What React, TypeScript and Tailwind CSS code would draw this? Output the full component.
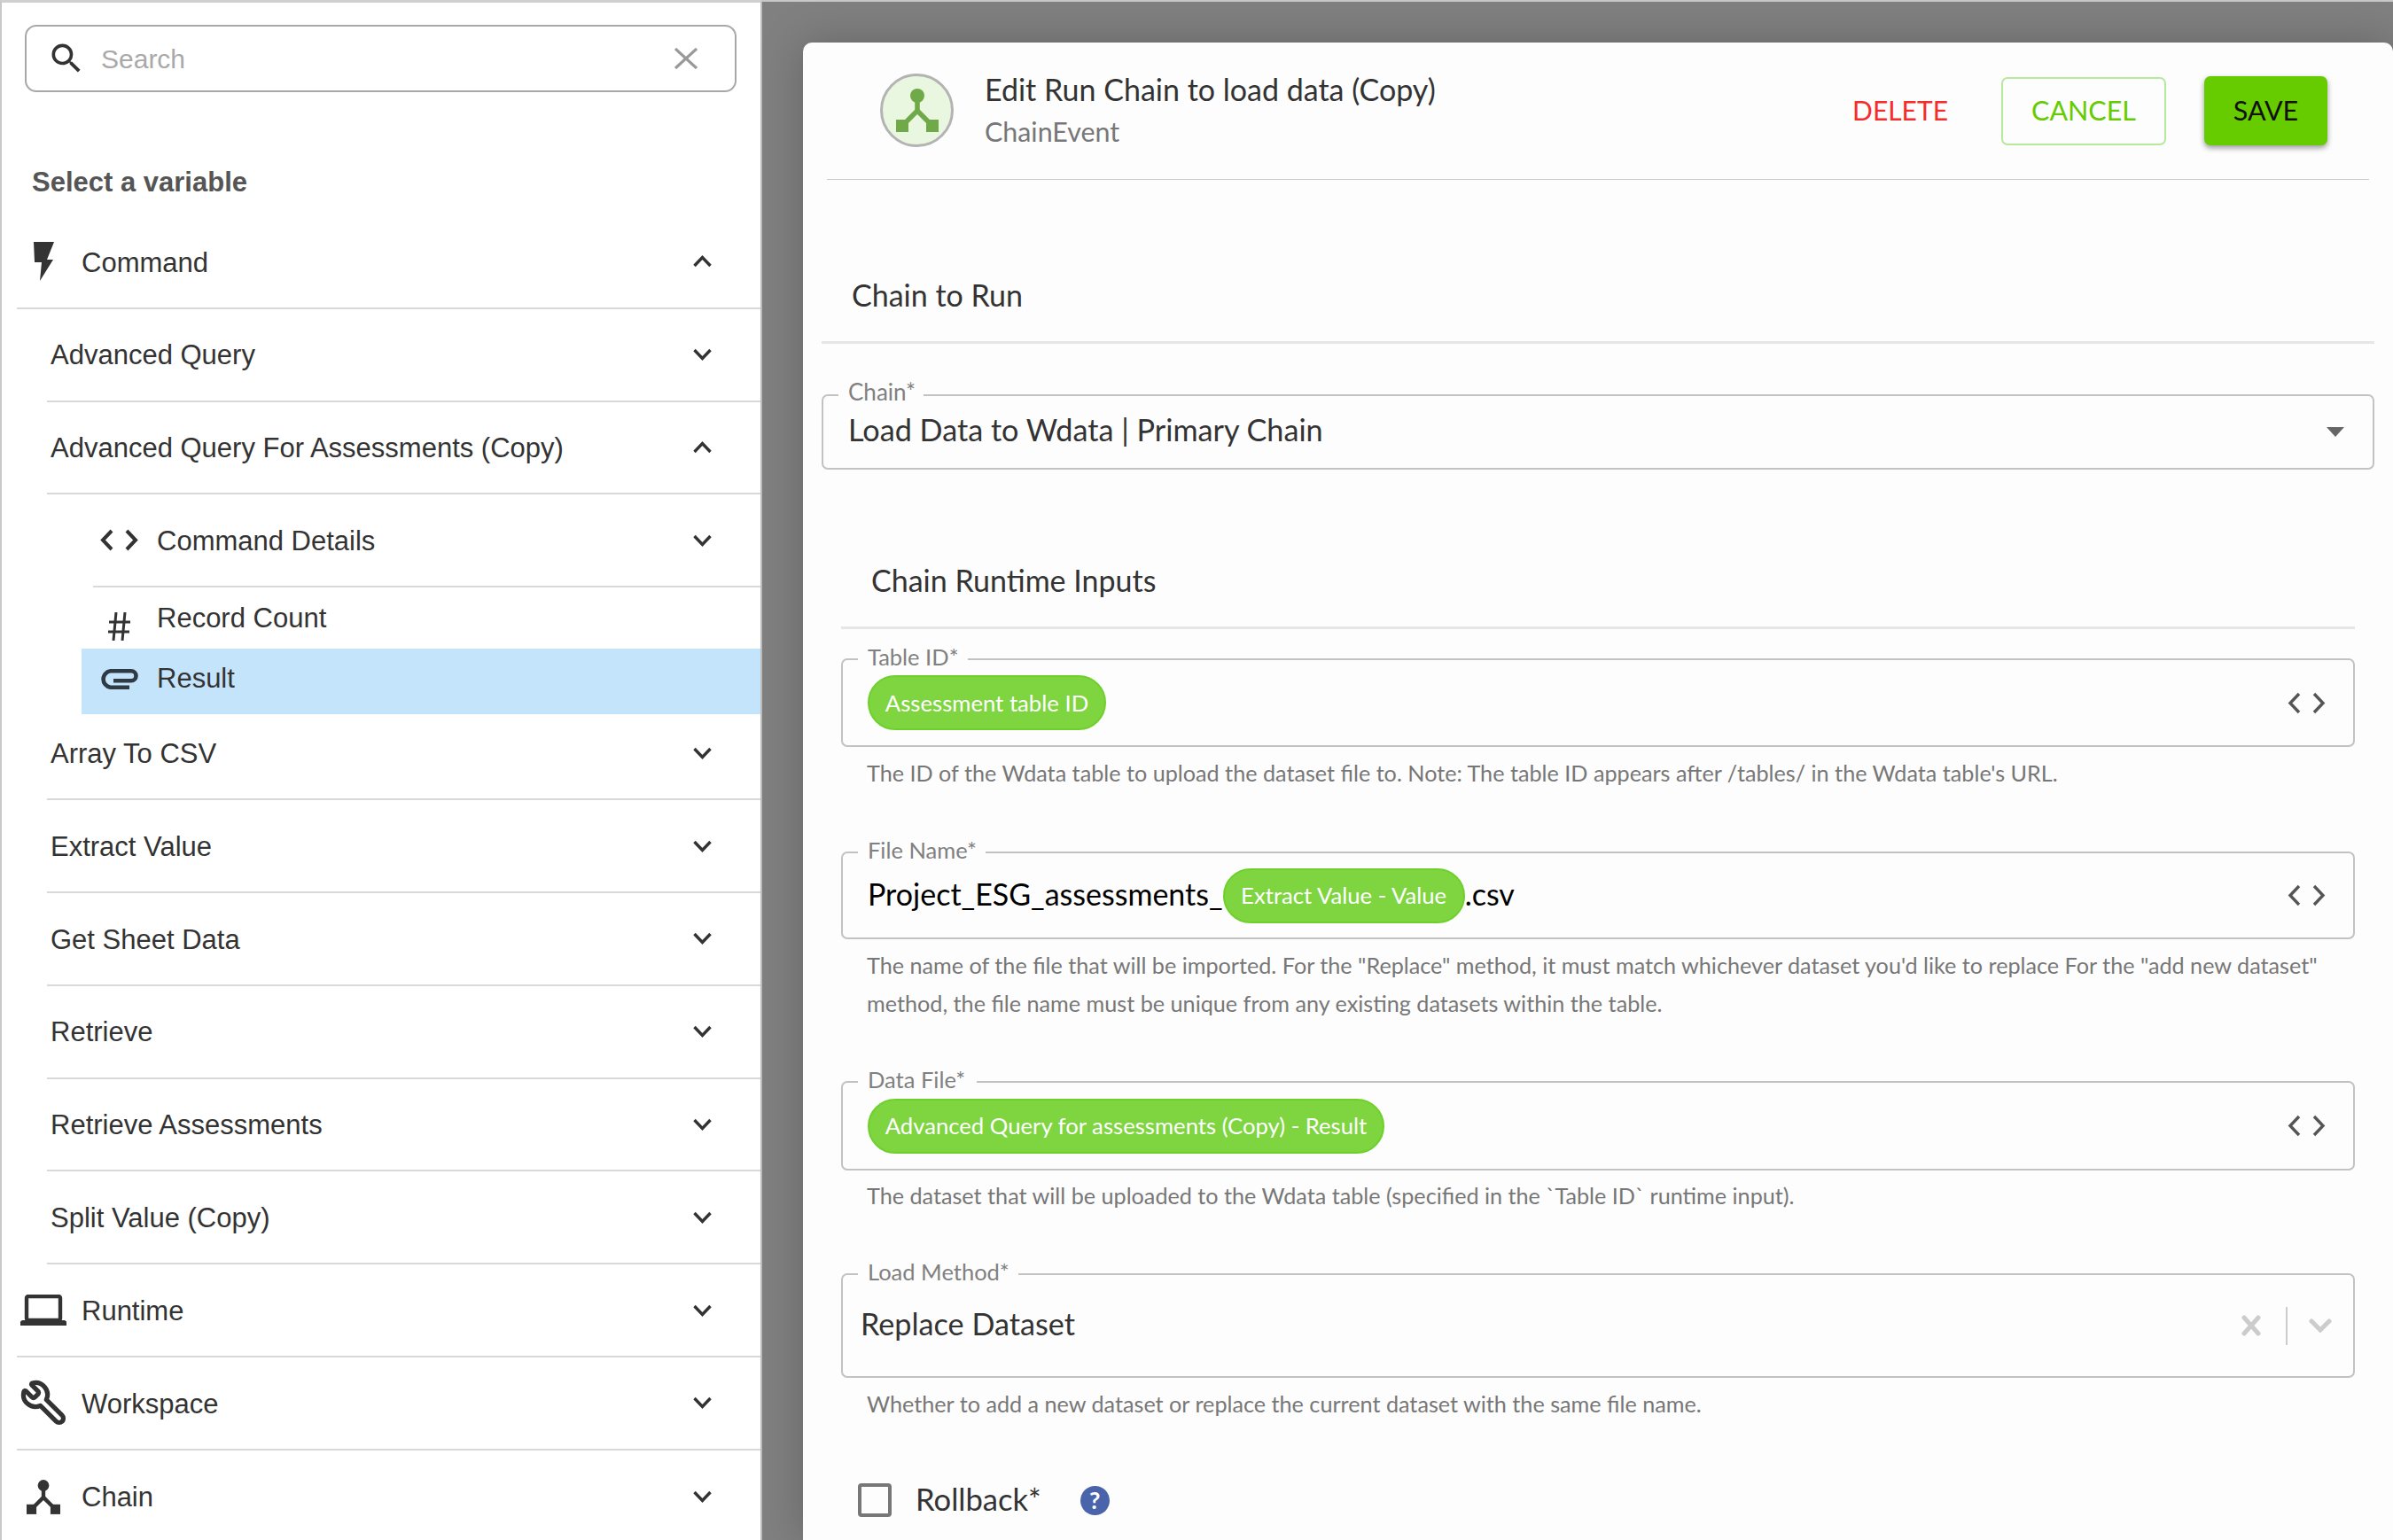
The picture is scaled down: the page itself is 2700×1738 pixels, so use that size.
import { MdSearch } from "react-icons/md";
import { Wrench } from "lucide-react";
import type { ReactNode } from "react";

function Chevron({ up }: { up?: boolean }) {
	return (
		<svg width="21" height="14" viewBox="0 0 21 14" fill="none" stroke="#333" strokeWidth="3.4" className={up ? "rotate-180" : ""}>
			<polyline points="1.5,2 10.5,11.5 19.5,2" />
		</svg>
	);
}

function Bolt() {
	return (
		<svg width="23" height="44" viewBox="0 0 23 44" fill="#333">
			<polygon points="0,0 23,0 15,20 22,20 7,44 9,23 1,23" />
		</svg>
	);
}

function Code({ w = 43, h = 25, color = "#333", sw = 4 }: { w?: number; h?: number; color?: string; sw?: number }) {
	return (
		<svg width={w} height={h} viewBox="0 0 43 25" fill="none" stroke={color} strokeWidth={sw}>
			<polyline points="13,2 3,12.5 13,23" />
			<polyline points="30,2 40,12.5 30,23" />
		</svg>
	);
}

function Hash() {
	return (
		<svg width="25" height="32" viewBox="0 0 25 32" fill="none" stroke="#333" strokeWidth="3">
			<line x1="9" y1="0" x2="6" y2="32" />
			<line x1="19" y1="0" x2="16" y2="32" />
			<line x1="1" y1="11" x2="25" y2="11" />
			<line x1="0" y1="22" x2="24" y2="22" />
		</svg>
	);
}

function Clip() {
	return (
		<svg width="43" height="23" viewBox="0 0 43 23" fill="none" stroke="#2f3b44" strokeWidth="4.6">
			<path d="M33 20.7 H11.5 A9.3 9.3 0 0 1 11.5 2.3 H35 A5.5 5.5 0 0 1 35 13.3 H15" />
		</svg>
	);
}

function Laptop() {
	return (
		<svg width="52" height="35" viewBox="0 0 52 35" fill="none" stroke="#333">
			<rect x="7" y="2" width="38" height="27" rx="2" strokeWidth="4.4" />
			<path d="M2 29 H50 L52 30.5 V35 H0 V30.5 Z" fill="#333" stroke="none" />
		</svg>
	);
}

function ChainIcon({ color = "#333", w = 38, h = 39 }: { color?: string; w?: number; h?: number }) {
	return (
		<svg width={w} height={h} viewBox="0 0 48 49" fill="none" stroke={color}>
			<circle cx="24" cy="8" r="8" fill={color} stroke="none" />
			<line x1="24" y1="12" x2="24" y2="27" strokeWidth="5.5" />
			<polyline points="9,40 24,25 39,40" strokeWidth="5.5" />
			<rect x="0" y="35" width="14" height="14" fill={color} stroke="none" />
			<rect x="34" y="35" width="14" height="14" fill={color} stroke="none" />
		</svg>
	);
}

function Row({ label, icon, level, up, h = "h-[104.8px]" }: { label: string; icon?: ReactNode; level: 0 | 1 | 2; up?: boolean; h?: string }) {
	const ml = level === 0 ? "ml-[19px]" : level === 1 ? "ml-[53px]" : "ml-[105px]";
	return (
		<div className={`${ml} ${h} flex items-center border-b-[2px] border-[#d9d9d9] pr-[55px]`}>
			{level === 0 && <div className="w-[60px] mr-[13px] flex justify-center shrink-0">{icon}</div>}
			{level === 1 && <div className="w-[4px] shrink-0" />}
			{level === 2 && <div className="w-[59px] mr-[13px] flex justify-center shrink-0">{icon}</div>}
			<span className="flex-1 pt-[3px] text-[31px] text-[#333]">{label}</span>
			<Chevron up={up} />
		</div>
	);
}

function Sidebar() {
	const rest = ["Extract Value", "Get Sheet Data", "Retrieve", "Retrieve Assessments", "Split Value (Copy)"];
	return (
		<aside className="w-[860px] shrink-0 h-full bg-white border-l-[2px] border-r-[2px] border-t-[3px] border-l-[#c8c8c8] border-r-[#bcbcbc] border-t-[#cfcfcf] font-['Liberation_Sans',sans-serif] overflow-hidden">
			<div className="ml-[26px] mr-[27px] mt-[25px] h-[76px] border-[2px] border-[#a8a8a8] rounded-[13px] flex items-center pl-[23px] pr-[42px]">
				<MdSearch size={44} color="#333" className="shrink-0" />
				<span className="ml-[17px] flex-1 text-[30px] text-[#a9a9a9]">Search</span>
				<svg width="26" height="24" viewBox="0 0 26 24" stroke="#999" strokeWidth="3.2">
					<line x1="1" y1="1" x2="25" y2="23" />
					<line x1="25" y1="1" x2="1" y2="23" />
				</svg>
			</div>
			<h2 className="ml-[34px] mt-[84px] h-[36px] leading-[36px] text-[31px] font-bold text-[#555]">Select a variable</h2>
			<div className="mt-[20px] -ml-[2px]">
				<Row label="Command" level={0} up icon={<Bolt />} />
				<Row label="Advanced Query" level={1} />
				<Row label="Advanced Query For Assessments (Copy)" level={1} up />
				<Row label="Command Details" level={2} icon={<Code />} />
				<div className="ml-[105px] h-[69px] flex items-center">
					<div className="w-[59px] mr-[13px] flex justify-center mt-[18px]"><Hash /></div>
					<span className="pt-[1px] text-[31px] text-[#333]">Record Count</span>
				</div>
				<div className="ml-[92px] h-[74px] bg-[#c3e4fb] flex items-center pl-[13px] pb-[6px]">
					<div className="w-[59px] mr-[13px] flex justify-center"><Clip /></div>
					<span className="text-[31px] text-[#333]">Result</span>
				</div>
				<Row label="Array To CSV" level={1} h="h-[97px] pb-[7px]" />
				{rest.map((label) => (
					<Row key={label} label={label} level={1} />
				))}
				<Row label="Runtime" level={0} icon={<Laptop />} />
				<Row label="Workspace" level={0} icon={<Wrench size={54} strokeWidth={2.3} color="#333" className="-scale-x-100 -my-[6px]" />} />
				<div className="ml-[19px] h-[104.8px] flex items-center pr-[55px]">
					<div className="w-[60px] mr-[13px] flex justify-center"><ChainIcon /></div>
					<span className="flex-1 pt-[3px] text-[31px] text-[#333]">Chain</span>
					<Chevron />
				</div>
			</div>
		</aside>
	);
}

function Field({ label, notch, h, mt, help, children, helpMt = "mt-[8px]" }: { label: string; notch: string; h: string; mt: string; help?: string[]; children: ReactNode; helpMt?: string }) {
	return (
		<div className={mt}>
			<div className={`relative ${h} border-[2px] border-[#c2c2c2] rounded-[7px] flex items-center`}>
				<span className={`absolute -top-[24px] left-[17px] ${notch} h-[40px] bg-[#fdfdfd] pl-[11px] leading-[40px] text-[25.5px] text-[#808080]`}>{label}</span>
				{children}
			</div>
			{help && (
				<div className={`${helpMt} pl-[29px] text-[25.2px] leading-[43px] text-[#777]`}>
					{help.map((line) => (
						<p key={line} className="whitespace-nowrap">{line}</p>
					))}
				</div>
			)}
		</div>
	);
}

function Pill({ label, w }: { label: string; w: string }) {
	return (
		<span className={`${w} h-[62px] shrink-0 rounded-full bg-[#7ed540] border-[2px] border-[#6fd02c] flex items-center justify-center text-[25.7px] text-white`}>{label}</span>
	);
}

function Modal() {
	return (
		<section className="w-full h-full bg-[#fdfdfd] rounded-tl-[10px] rounded-tr-[10px] shadow-[0_0_50px_rgba(0,0,0,0.22)] font-['Lato',sans-serif]">
			<header className="mx-[27px] h-[155px] border-b border-[#cccccc] flex items-center pl-[60px] pr-[47px]">
				<div className="w-[83px] h-[83px] rounded-full bg-[#e9f6e0] border-[3px] border-[#b3b3b3] flex items-center justify-center shrink-0 -mt-[1px]">
					<ChainIcon color="#6fa948" w={48} h={49} />
				</div>
				<div className="ml-[35px] flex-1">
					<div className="text-[34px] leading-[44px] text-[#333] -mt-[3px]">Edit Run Chain to load data (Copy)</div>
					<div className="text-[30.4px] leading-[40px] mt-[5px] text-[#777]">ChainEvent</div>
				</div>
				<span className="text-[30px] text-[#f52c2c] mb-[2px]">DELETE</span>
				<button className="ml-[60px] w-[186px] h-[77px] rounded-[7px] border-[2px] border-[#b7e99c] text-[30.5px] text-[#66cc00]">CANCEL</button>
				<button className="ml-[43px] w-[139px] h-[78px] rounded-[7px] bg-[#66cc00] text-[30.5px] text-[#111] shadow-[0_3px_6px_rgba(0,0,0,0.4)]">SAVE</button>
			</header>

			<div className="mx-[21px] h-[185px] border-b-[3px] border-[#e6e6e6] flex items-end pl-[34px] pb-[30px]">
				<h3 className="text-[34px] leading-[44px] text-[#333]">Chain to Run</h3>
			</div>

			<div className="mx-[21px] mt-[57px] h-[85px] relative border-[2px] border-[#c2c2c2] rounded-[7px] flex items-center pl-[28px] pr-[32px]">
				<span className="absolute -top-[23px] left-[17px] w-[96px] h-[36px] bg-[#fdfdfd] pl-[11px] leading-[36px] text-[26px] text-[#808080]">Chain*</span>
				<span className="flex-1 text-[34.2px] text-[#333] mb-[6px]">Load Data to Wdata | Primary Chain</span>
				<div className="w-0 h-0 border-l-[10px] border-r-[10px] border-t-[11px] border-l-transparent border-r-transparent border-t-[#666]" />
			</div>

			<div className="mx-[43px]">
				<div className="h-[180px] border-b-[3px] border-[#e6e6e6] flex items-end pl-[34px] pb-[30px]">
					<h3 className="text-[34px] leading-[44px] text-[#333]">Chain Runtime Inputs</h3>
				</div>

				<Field label="Table ID*" notch="w-[124px]" h="h-[100px]" mt="mt-[33px]" help={["The ID of the Wdata table to upload the dataset file to. Note: The table ID appears after /tables/ in the Wdata table's URL."]}>
					<div className="flex-1 pl-[28px] flex"><Pill label="Assessment table ID" w="w-[269px]" /></div>
					<div className="mr-[31px]"><Code color="#555" sw={3.4} /></div>
				</Field>

				<Field label="File Name*" notch="w-[144px]" h="h-[99px]" mt="mt-[67px]" help={["The name of the file that will be imported. For the \"Replace\" method, it must match whichever dataset you'd like to replace For the \"add new dataset\"", "method, the file name must be unique from any existing datasets within the table."]}>
					<div className="flex-1 pl-[28px] flex items-center text-[34px] text-black">
						<span className="mb-[5px]">Project_ESG_assessments_</span>
						<Pill label="Extract Value - Value" w="w-[273px]" />
						<span className="mb-[5px]">.csv</span>
					</div>
					<div className="mr-[31px]"><Code color="#555" sw={3.4} /></div>
				</Field>

				<Field label="Data File*" notch="w-[134px]" h="h-[101px]" mt="mt-[66px]" helpMt="mt-[7px]" help={["The dataset that will be uploaded to the Wdata table (specified in the `Table ID` runtime input)."]}>
					<div className="flex-1 pl-[28px] flex"><Pill label="Advanced Query for assessments (Copy) - Result" w="w-[583px]" /></div>
					<div className="mr-[31px]"><Code color="#555" sw={3.4} /></div>
				</Field>

				<Field label="Load Method*" notch="w-[181px]" h="h-[118px]" mt="mt-[66px]" help={["Whether to add a new dataset or replace the current dataset with the same file name."]}>
					<span className="flex-1 pl-[20px] text-[34.2px] text-[#333] mb-[4px]">Replace Dataset</span>
					<svg width="22" height="24" viewBox="0 0 22 24" stroke="#cccccc" strokeWidth="5" strokeLinecap="round">
						<line x1="3" y1="3" x2="19" y2="21" />
						<line x1="19" y1="3" x2="3" y2="21" />
					</svg>
					<div className="w-[2px] h-[43px] bg-[#cccccc] ml-[28px] mr-[24px]" />
					<svg width="26" height="16" viewBox="0 0 26 16" fill="none" stroke="#cccccc" strokeWidth="5" strokeLinecap="round">
						<polyline points="3,3 13,13 23,3" />
					</svg>
					<div className="w-[24px]" />
				</Field>

				<div className="mt-[68px] ml-[19px] flex items-center h-[38px]">
					<div className="w-[38px] h-[38px] rounded-[4px] border-[4px] border-[#777]" />
					<span className="ml-[27px] text-[34.6px] text-[#333] mb-[3px]">Rollback*</span>
					<div className="ml-[44px] w-[33px] h-[33px] rounded-full bg-[#4a64ab] text-white text-[27px] font-bold flex items-center justify-center">?</div>
				</div>
			</div>
		</section>
	);
}

export default function App() {
	return (
		<div className="w-[2700px] h-[1738px] flex overflow-hidden bg-[#808080]">
			<Sidebar />
			<main className="flex-1 min-w-0 h-full pl-[46px] pt-[46px] border-t-[2px] border-[#c8c8c8]">
				<Modal />
			</main>
		</div>
	);
}
